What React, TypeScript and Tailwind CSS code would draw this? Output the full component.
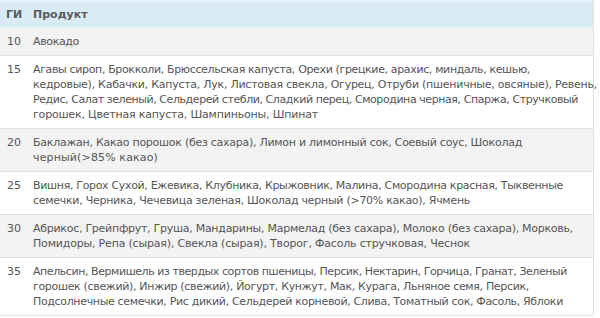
import React, { useLayoutEffect, useRef } from 'react';

// each line with the width it takes in the reference (px)
const rows: { gi: string; lines: [string, number][] }[] = [
  { gi: '10', lines: [['Авокадо', 46]] },
  {
    gi: '15',
    lines: [
      ['Агавы сироп, Брокколи, Брюссельская капуста, Орехи (грецкие, арахис, миндаль, кешью,', 497],
      ['кедровые), Кабачки, Капуста, Лук, Листовая свекла, Огурец, Отруби (пшеничные, овсяные), Ревень,', 564],
      ['Редис, Салат зеленый, Сельдерей стебли, Сладкий перец, Смородина черная, Спаржа, Стручковый', 545],
      ['горошек, Цветная капуста, Шампиньоны, Шпинат', 285],
    ],
  },
  {
    gi: '20',
    lines: [
      ['Баклажан, Какао порошок (без сахара), Лимон и лимонный сок, Соевый соус, Шоколад', 489],
      ['черный(>85% какао)', 125],
    ],
  },
  {
    gi: '25',
    lines: [
      ['Вишня, Горох Сухой, Ежевика, Клубника, Крыжовник, Малина, Смородина красная, Тыквенные', 530],
      ['семечки, Черника, Чечевица зеленая, Шоколад черный (>70% какао), Ячмень', 437],
    ],
  },
  {
    gi: '30',
    lines: [
      ['Абрикос, Грейпфрут, Груша, Мандарины, Мармелад (без сахара), Молоко (без сахара), Морковь,', 540],
      ['Помидоры, Репа (сырая), Свекла (сырая), Творог, Фасоль стручковая, Чеснок', 437],
    ],
  },
  {
    gi: '35',
    lines: [
      ['Апельсин, Вермишель из твердых сортов пшеницы, Персик, Нектарин, Горчица, Гранат, Зеленый', 534],
      ['горошек (свежий), Инжир (свежий), Йогурт, Кунжут, Мак, Курага, Льняное семя, Персик,', 496],
      ['Подсолнечные семечки, Рис дикий, Сельдерей корневой, Слива, Томатный сок, Фасоль, Яблоки', 530],
    ],
  },
];

// squeeze/stretch a line so it ends where the reference line ends
const Line = ({ text, width }: { text: string; width: number }) => {
  const ref = useRef<HTMLSpanElement>(null);

  useLayoutEffect(() => {
    const fit = () => {
      const el = ref.current;
      if (!el) return;
      el.style.letterSpacing = '0px';
      const natural = el.getBoundingClientRect().width;
      el.style.letterSpacing = `${(width - natural) / text.length}px`;
    };
    fit();
    document.fonts?.ready.then(fit);
  }, [text, width]);

  return (
    <div className="whitespace-nowrap">
      <span ref={ref}>{text}</span>
    </div>
  );
};

export default function App() {
  return (
    <div className="w-[600px] h-[318px] overflow-hidden bg-white">
      <div
        className="w-[594px] border-r border-[#e2e2e2] text-[11px] leading-[15px] text-[#555]"
        style={{ fontFamily: '"DejaVu Sans", Verdana, sans-serif' }}
      >
        {/* Header */}
        <div className="flex h-[28px] items-center bg-[#d9ebf5] border-t-2 border-[#e8f3f9] border-b border-[#d0e2ec] font-bold text-[#5a5a5a]">
          <div className="w-[33px] pl-[6px]">ГИ</div>
          <div>Продукт</div>
        </div>

        {rows.map((r, i) => (
          <div
            key={r.gi}
            className={`flex border-b border-[#e0e0e0] py-[6px] ${i % 2 === 0 ? 'bg-[#f3f3f3]' : 'bg-white'}`}
          >
            <div className="w-[33px] shrink-0 pl-[7px]">{r.gi}</div>
            <div className="flex-1 min-w-0">
              {r.lines.map(([l, w]) => (
                <Line key={l} text={l} width={w} />
              ))}
            </div>
          </div>
        ))}
      </div>
    </div>
  );
}
